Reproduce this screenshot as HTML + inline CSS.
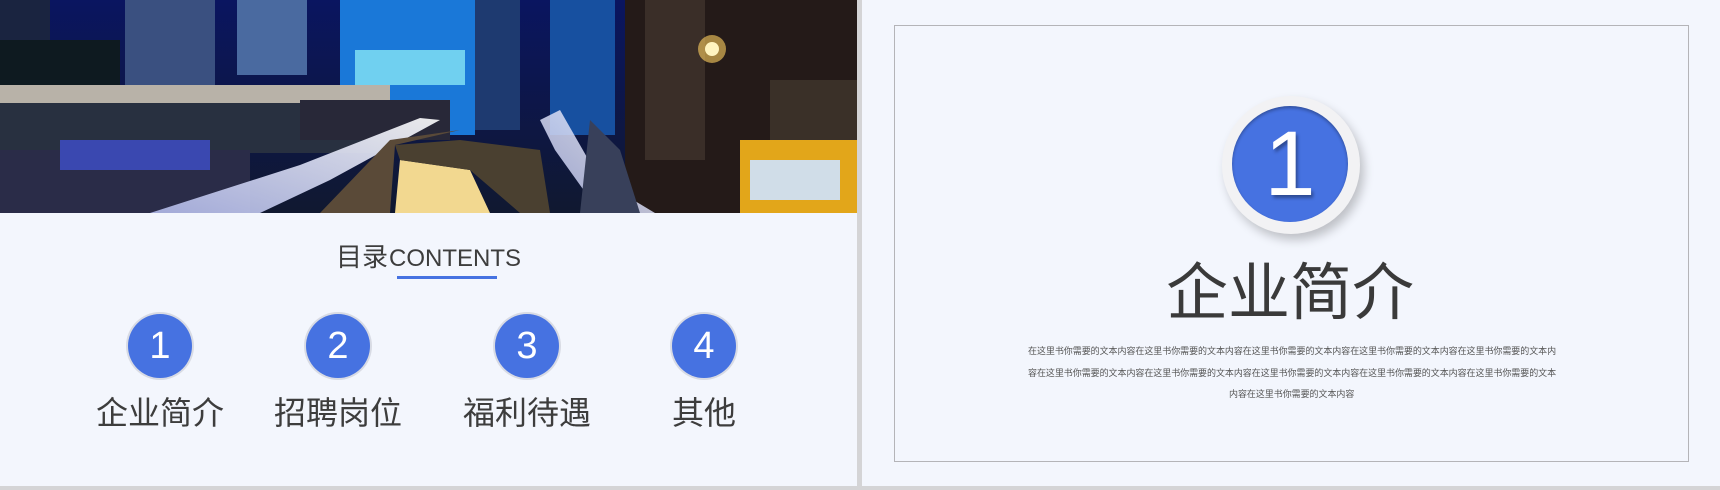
<!DOCTYPE html>
<html><head><meta charset="utf-8"><style>
*{margin:0;padding:0;box-sizing:border-box}
body{width:1720px;height:490px;background:#d4d4d6;position:relative;overflow:hidden;font-family:"Liberation Sans","Noto Sans CJK SC",sans-serif}
.panel{position:absolute;background:#f3f6fd}
.c{position:absolute;border-radius:50%;background:#4672e1;color:#fff;text-align:center;box-shadow:0 0 0 2px #d8dbe4}
.lbl{position:absolute;font-size:32px;color:#3d3d3d;text-align:center;width:200px}
.t{position:absolute;font-size:9px;color:#555;white-space:nowrap;letter-spacing:-0.05px}
</style></head><body>
<div class="panel" style="left:0;top:0;width:857px;height:486px"></div>
<div class="panel" style="left:862px;top:0;width:858px;height:486px"></div>
<svg style="position:absolute;left:0;top:0" width="857" height="213" viewBox="0 0 857 213">
<defs>
<linearGradient id="sky" x1="0" y1="0" x2="0" y2="1"><stop offset="0" stop-color="#0a1560"/><stop offset="1" stop-color="#101830"/></linearGradient>
<linearGradient id="rd" x1="0" y1="1" x2="1" y2="0"><stop offset="0" stop-color="#b0b8e8"/><stop offset="1" stop-color="#ffffff"/></linearGradient>
</defs>
<rect width="857" height="213" fill="url(#sky)"/>
<rect x="0" y="0" width="50" height="40" fill="#1a2440"/>
<rect x="0" y="40" width="120" height="60" fill="#0e1a20"/>
<rect x="125" y="0" width="90" height="100" fill="#3a5080"/>
<rect x="237" y="0" width="70" height="75" fill="#4a6aa0"/>
<rect x="340" y="0" width="135" height="135" fill="#1a78d8"/>
<rect x="355" y="50" width="110" height="35" fill="#70d0f0"/>
<rect x="475" y="0" width="45" height="130" fill="#1e3a70"/>
<rect x="550" y="0" width="65" height="135" fill="#1750a0"/>
<rect x="0" y="85" width="390" height="18" fill="#b8b2a8"/>
<rect x="0" y="103" width="390" height="50" fill="#283040"/>
<rect x="300" y="100" width="150" height="40" fill="#282838"/>
<rect x="625" y="0" width="232" height="213" fill="#241a18"/>
<rect x="645" y="0" width="60" height="160" fill="#3a2e28"/>
<rect x="770" y="80" width="87" height="60" fill="#3a3028"/>
<rect x="740" y="140" width="117" height="73" fill="#e2a61a"/>
<rect x="750" y="160" width="90" height="40" fill="#d0dde8"/>
<circle cx="712" cy="49" r="14" fill="#ffd060" opacity=".6"/>
<circle cx="712" cy="49" r="7" fill="#fff4c0"/>
<rect x="0" y="150" width="250" height="63" fill="#2a2c48"/>
<rect x="60" y="140" width="150" height="30" fill="#3a48b0"/>
<polygon points="150,213 260,213 330,180 440,120 420,118 300,165" fill="url(#rd)" opacity=".9"/>
<polygon points="320,213 390,213 395,145 460,130 390,140" fill="#5a4a38"/>
<polygon points="395,213 490,213 470,170 400,160" fill="#f2d890"/>
<polygon points="460,140 395,145 400,160 470,170 520,213 550,213 540,150" fill="#4a4030"/>
<polygon points="540,120 560,110 600,180 655,213 600,213 555,150" fill="url(#rd)" opacity=".85"/>
<polygon points="580,213 640,213 620,150 590,120" fill="#38405a"/>
</svg>
<div style="position:absolute;left:0;top:239px;width:857px;text-align:center;color:#3d3d3d;line-height:36px"><span style="font-size:26px">目录</span><span style="font-size:24px;margin-left:1px">CONTENTS</span></div>
<div style="position:absolute;left:397px;top:276px;width:100px;height:3px;background:#4672e1"></div>
<div class="c" style="left:128px;top:314px;width:64px;height:64px;font-size:38px;line-height:64px">1</div>
<div class="c" style="left:306px;top:314px;width:64px;height:64px;font-size:38px;line-height:64px">2</div>
<div class="c" style="left:495px;top:314px;width:64px;height:64px;font-size:38px;line-height:64px">3</div>
<div class="c" style="left:672px;top:314px;width:64px;height:64px;font-size:38px;line-height:64px">4</div>
<div class="lbl" style="left:60px;top:388px">企业简介</div>
<div class="lbl" style="left:238px;top:388px">招聘岗位</div>
<div class="lbl" style="left:427px;top:388px">福利待遇</div>
<div class="lbl" style="left:604px;top:388px">其他</div>

<div style="position:absolute;left:894px;top:25px;width:795px;height:437px;border:1px solid #b4b4b8"></div>
<div style="position:absolute;left:1222px;top:96px;width:138px;height:138px;border-radius:50%;background:#f2f2f4;box-shadow:4px 6px 10px rgba(0,0,0,.22)"></div>
<div style="position:absolute;left:1232px;top:106px;width:116px;height:116px;border-radius:50%;background:#4672e1;box-shadow:inset 0 2px 3px rgba(0,0,0,.3)"></div>
<div style="position:absolute;left:1232px;top:106px;width:116px;height:116px;text-align:center;color:#fff;font-size:92px;line-height:116px;text-shadow:2px 3px 3px rgba(0,0,0,.35)">1</div>
<div style="position:absolute;left:1090px;top:254px;width:400px;text-align:center;font-size:62px;color:#3a3a3a;line-height:80px">企业简介</div>
<div class="t" style="left:1028px;top:344px">在这里书你需要的文本内容在这里书你需要的文本内容在这里书你需要的文本内容在这里书你需要的文本内容在这里书你需要的文本内</div>
<div class="t" style="left:1028px;top:366px">容在这里书你需要的文本内容在这里书你需要的文本内容在这里书你需要的文本内容在这里书你需要的文本内容在这里书你需要的文本</div>
<div class="t" style="left:1229px;top:387px">内容在这里书你需要的文本内容</div>
</body></html>
